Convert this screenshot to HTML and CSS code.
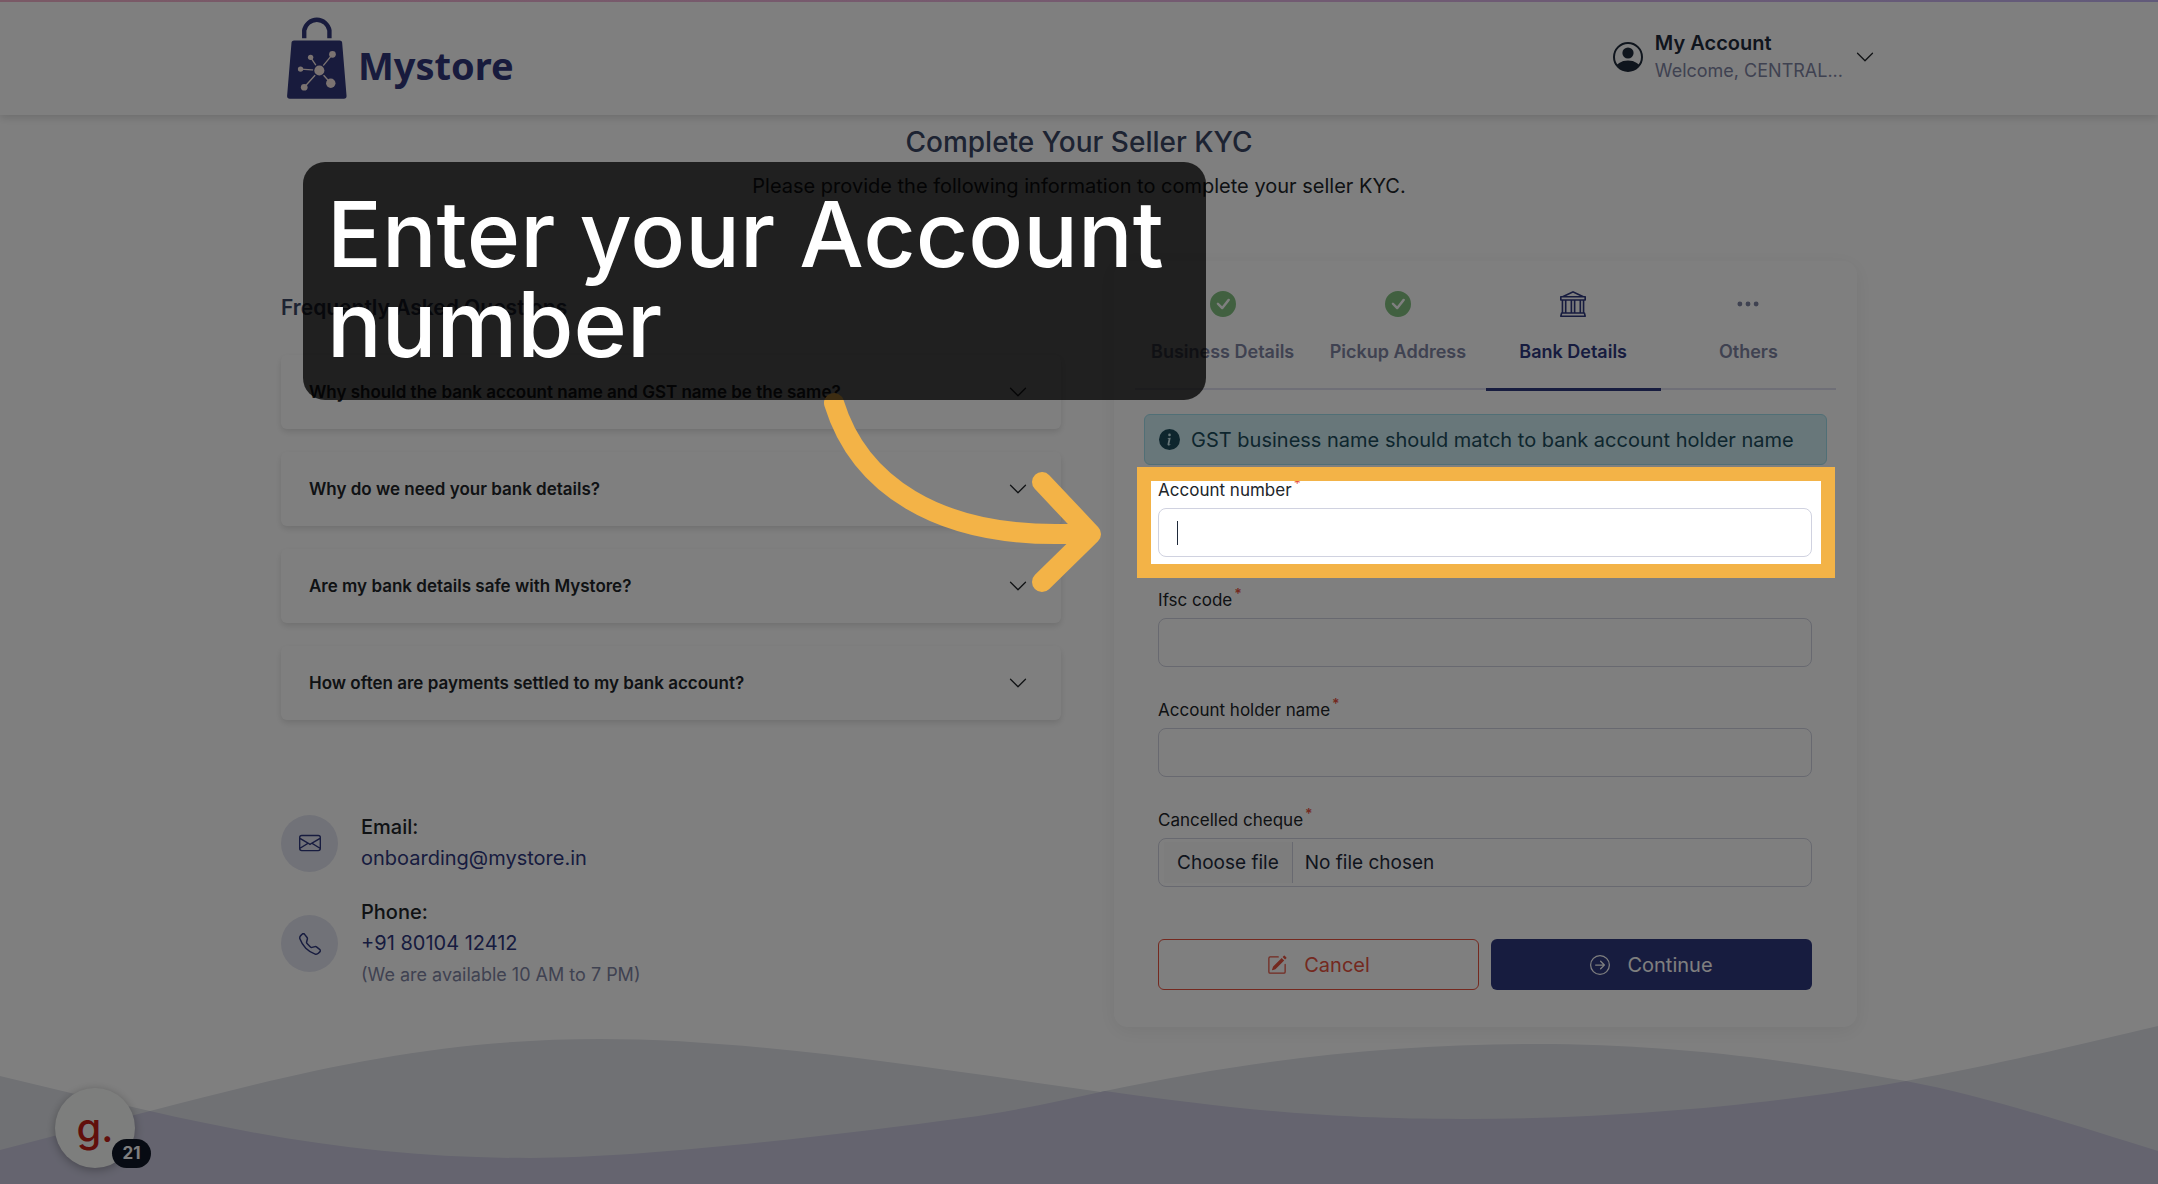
FILE: index.html
```html
<!DOCTYPE html>
<html lang="en">
<head>
    <meta charset="UTF-8">
    <meta name="viewport" content="width=device-width, initial-scale=1.0">
    <title>Complete Your Seller KYC | Mystore</title>
    <link rel="stylesheet" href="styles.css">
</head>
<body>
    <!-- Header -->
    <header class="header">
        <div class="container header-inner">
            <a href="#" class="logo">
                <svg class="logo-bag" viewBox="84 44 178 250" aria-hidden="true">
                    <path d="M135 113V90a38 38 0 0 1 75 0v23" fill="none" stroke="#30367a" stroke-width="13"/>
                    <path d="M105 120h135q8 0 8 8l13 157q0 8-8 8H92q-8 0-8-8l13-157q0-8 8-8z" fill="#30367a"/>
                    <g stroke="#f6e6e2" stroke-width="4">
                        <path d="M180 209L219 161M180 209L154 170M180 209L124 205M180 209L135 259M180 209L214 247"/>
                    </g>
                    <circle cx="180" cy="209" r="19" fill="#30367a"/>
                    <g fill="#f6e6e2">
                        <circle cx="180" cy="209" r="15"/>
                        <circle cx="219" cy="161" r="10"/>
                        <circle cx="154" cy="170" r="8"/>
                        <circle cx="124" cy="205" r="8"/>
                        <circle cx="135" cy="259" r="10"/>
                        <circle cx="214" cy="247" r="14"/>
                    </g>
                </svg>
                <span class="logo-text">Mystore</span>
            </a>
            <button type="button" class="account">
                <svg class="account-icon" viewBox="0 0 30 30" aria-hidden="true">
                    <clipPath id="face"><circle cx="15" cy="15" r="14"/></clipPath>
                    <circle cx="15" cy="15" r="14" fill="none" stroke="currentColor" stroke-width="2"/>
                    <circle cx="15" cy="11" r="5.6" fill="currentColor"/>
                    <ellipse cx="15" cy="27" rx="12.5" ry="8.5" fill="currentColor" clip-path="url(#face)"/>
                </svg>
                <span class="account-text">
                    <span class="account-title">My Account</span>
                    <span class="account-name">Welcome, CENTRAL...</span>
                </span>
                <svg class="chevron" viewBox="0 0 16 16" aria-hidden="true"><path d="M1.646 4.646a.5.5 0 0 1 .708 0L8 10.293l5.646-5.647a.5.5 0 0 1 .708.708l-6 6a.5.5 0 0 1-.708 0l-6-6a.5.5 0 0 1 0-.708"/></svg>
            </button>
        </div>
    </header>

    <!-- Main Content -->
    <main class="container main">
        <h1>Complete Your Seller KYC</h1>
        <p class="subtitle">Please provide the following information to complete your seller KYC.</p>

        <div class="columns">
            <section class="help">
                <h2>Frequently Asked Questions</h2>
                <div class="faq-list">
                    <button type="button" class="faq-item">
                        Why should the bank account name and GST name be the same?
                        <svg class="chevron" viewBox="0 0 16 16" aria-hidden="true"><path d="M1.646 4.646a.5.5 0 0 1 .708 0L8 10.293l5.646-5.647a.5.5 0 0 1 .708.708l-6 6a.5.5 0 0 1-.708 0l-6-6a.5.5 0 0 1 0-.708"/></svg>
                    </button>
                    <button type="button" class="faq-item">
                        Why do we need your bank details?
                        <svg class="chevron" viewBox="0 0 16 16" aria-hidden="true"><path d="M1.646 4.646a.5.5 0 0 1 .708 0L8 10.293l5.646-5.647a.5.5 0 0 1 .708.708l-6 6a.5.5 0 0 1-.708 0l-6-6a.5.5 0 0 1 0-.708"/></svg>
                    </button>
                    <button type="button" class="faq-item">
                        Are my bank details safe with Mystore?
                        <svg class="chevron" viewBox="0 0 16 16" aria-hidden="true"><path d="M1.646 4.646a.5.5 0 0 1 .708 0L8 10.293l5.646-5.647a.5.5 0 0 1 .708.708l-6 6a.5.5 0 0 1-.708 0l-6-6a.5.5 0 0 1 0-.708"/></svg>
                    </button>
                    <button type="button" class="faq-item">
                        How often are payments settled to my bank account?
                        <svg class="chevron" viewBox="0 0 16 16" aria-hidden="true"><path d="M1.646 4.646a.5.5 0 0 1 .708 0L8 10.293l5.646-5.647a.5.5 0 0 1 .708.708l-6 6a.5.5 0 0 1-.708 0l-6-6a.5.5 0 0 1 0-.708"/></svg>
                    </button>
                </div>

                <div class="contact">
                    <div class="contact-row">
                        <span class="contact-icon">
                            <svg viewBox="0 0 16 16" aria-hidden="true"><path d="M0 4a2 2 0 0 1 2-2h12a2 2 0 0 1 2 2v8a2 2 0 0 1-2 2H2a2 2 0 0 1-2-2zm2-1a1 1 0 0 0-1 1v.217l7 4.2 7-4.2V4a1 1 0 0 0-1-1zm13 2.383-4.708 2.825L15 11.105zm-.034 6.876-5.64-3.471L8 9.583l-1.326-.795-5.64 3.47A1 1 0 0 0 2 13h12a1 1 0 0 0 .966-.741M1 11.105l4.708-2.897L1 5.383z"/></svg>
                        </span>
                        <div class="contact-info">
                            <strong>Email:</strong>
                            <a href="mailto:onboarding@mystore.in">onboarding@mystore.in</a>
                        </div>
                    </div>
                    <div class="contact-row">
                        <span class="contact-icon">
                            <svg viewBox="0 0 16 16" aria-hidden="true"><path d="M3.654 1.328a.678.678 0 0 0-1.015-.063L1.605 2.3c-.483.484-.661 1.169-.45 1.77a17.6 17.6 0 0 0 4.168 6.608 17.6 17.6 0 0 0 6.608 4.168c.601.211 1.286.033 1.77-.45l1.034-1.034a.678.678 0 0 0-.063-1.015l-2.307-1.794a.68.68 0 0 0-.58-.122l-2.19.547a1.75 1.75 0 0 1-1.657-.459L5.482 8.062a1.75 1.75 0 0 1-.46-1.657l.548-2.19a.68.68 0 0 0-.122-.58zM1.884.511a1.745 1.745 0 0 1 2.612.163L6.29 2.98c.329.423.445.974.315 1.494l-.547 2.19a.68.68 0 0 0 .178.643l2.457 2.457a.68.68 0 0 0 .644.178l2.189-.547a1.75 1.75 0 0 1 1.494.315l2.306 1.794c.829.645.905 1.87.163 2.611l-1.034 1.034c-.74.74-1.846 1.065-2.877.702a18.6 18.6 0 0 1-7.01-4.42 18.6 18.6 0 0 1-4.42-7.009c-.362-1.03-.037-2.137.703-2.877z"/></svg>
                        </span>
                        <div class="contact-info">
                            <strong>Phone:</strong>
                            <a href="tel:+918010412412">+91 80104 12412</a>
                            <small>(We are available 10 AM to 7 PM)</small>
                        </div>
                    </div>
                </div>
            </section>

            <section class="card">
                <nav class="tabs">
                    <a href="#" class="tab">
                        <svg class="done" viewBox="0 0 16 16" aria-hidden="true"><path d="M16 8A8 8 0 1 1 0 8a8 8 0 0 1 16 0m-3.97-3.03a.75.75 0 0 0-1.08.022L7.477 9.417 5.384 7.323a.75.75 0 0 0-1.06 1.06L6.97 11.03a.75.75 0 0 0 1.079-.02l3.992-4.99a.75.75 0 0 0-.01-1.05z"/></svg>
                        Business Details
                    </a>
                    <a href="#" class="tab">
                        <svg class="done" viewBox="0 0 16 16" aria-hidden="true"><path d="M16 8A8 8 0 1 1 0 8a8 8 0 0 1 16 0m-3.97-3.03a.75.75 0 0 0-1.08.022L7.477 9.417 5.384 7.323a.75.75 0 0 0-1.06 1.06L6.97 11.03a.75.75 0 0 0 1.079-.02l3.992-4.99a.75.75 0 0 0-.01-1.05z"/></svg>
                        Pickup Address
                    </a>
                    <a href="#" class="tab active">
                        <svg viewBox="0 0 16 16" aria-hidden="true"><path d="m8 0 6.61 3h.89a.5.5 0 0 1 .5.5v2a.5.5 0 0 1-.5.5H15v7a.5.5 0 0 1 .485.38l.5 2a.498.498 0 0 1-.485.62H.5a.498.498 0 0 1-.485-.62l.5-2A.5.5 0 0 1 1 13V6H.5a.5.5 0 0 1-.5-.5v-2A.5.5 0 0 1 .5 3h.89zM3.777 3h8.447L8 1zM2 6v7h1V6zm2 0v7h2.5V6zm3.5 0v7h1V6zm2 0v7H12V6zM13 6v7h1V6zm2-1V4H1v1zm-.39 9H1.39l-.25 1h13.72z"/></svg>
                        Bank Details
                    </a>
                    <a href="#" class="tab">
                        <svg viewBox="0 0 16 16" aria-hidden="true"><path d="M3 9.500a1.500 1.500 0 1 1 0-3 1.500 1.500 0 0 1 0 3m5 0a1.500 1.500 0 1 1 0-3 1.500 1.500 0 0 1 0 3m5 0a1.500 1.500 0 1 1 0-3 1.500 1.500 0 0 1 0 3"/></svg>
                        Others
                    </a>
                </nav>

                <div class="alert">
                    <svg viewBox="0 0 16 16" aria-hidden="true"><path d="M8 16A8 8 0 1 0 8 0a8 8 0 0 0 0 16m.93-9.412-1 4.705c-.07.34.029.533.304.533.194 0 .487-.07.686-.246l-.088.416c-.287.346-.92.598-1.465.598-.703 0-1.002-.422-.808-1.319l.738-3.468c.064-.293.006-.399-.287-.47l-.451-.081.082-.381 2.290-.287zM8 5.500a1 1 0 1 1 0-2 1 1 0 0 1 0 2"/></svg>
                    GST business name should match to bank account holder name
                </div>

                <form class="kyc-form">
                    <div class="form-group">
                        <label for="account">Account number<sup>*</sup></label>
                        <input type="text" id="account">
                        <span class="caret"></span>
                        <!-- Highlighted step, its shadow dims the rest of the page -->
                        <div class="spotlight"></div>
                    </div>
                    <div class="form-group">
                        <label for="ifsc">Ifsc code<sup>*</sup></label>
                        <input type="text" id="ifsc">
                    </div>
                    <div class="form-group">
                        <label for="holder">Account holder name<sup>*</sup></label>
                        <input type="text" id="holder">
                    </div>
                    <div class="form-group">
                        <label for="cheque">Cancelled cheque<sup>*</sup></label>
                        <label for="cheque" class="file-box">
                            <span class="file-btn">Choose file</span>
                            <span class="file-name">No file chosen</span>
                        </label>
                        <input type="file" id="cheque" class="file-input">
                    </div>
                    <div class="form-actions">
                        <button type="button" class="btn btn-cancel">
                            <svg viewBox="0 0 16 16" aria-hidden="true"><path d="M15.502 1.940a.5.5 0 0 1 0 .706L14.459 3.690l-2-2L13.502.646a.5.5 0 0 1 .707 0l1.293 1.293zm-1.750 2.456-2-2L4.939 9.210a.5.5 0 0 0-.121.196l-.805 2.414a.25.25 0 0 0 .316.316l2.414-.805a.5.5 0 0 0 .196-.120z"/><path d="M1 13.500A1.500 1.500 0 0 0 2.500 15h11a1.500 1.500 0 0 0 1.500-1.500v-6a.5.5 0 0 0-1 0v6a.5.5 0 0 1-.5.5h-11a.5.5 0 0 1-.5-.5v-11a.5.5 0 0 1 .5-.5H9a.5.5 0 0 0 0-1H2.500A1.500 1.500 0 0 0 1 2.500z"/></svg>
                            Cancel
                        </button>
                        <button type="submit" class="btn btn-continue">
                            <svg viewBox="0 0 16 16" aria-hidden="true"><path d="M1 8a7 7 0 1 0 14 0A7 7 0 0 0 1 8m15 0A8 8 0 1 1 0 8a8 8 0 0 1 16 0M4.500 7.500a.5.5 0 0 0 0 1h5.793l-2.147 2.146a.5.5 0 0 0 .708.708l3-3a.5.5 0 0 0 0-.708l-3-3a.5.5 0 1 0-.708.708L10.293 7.500z"/></svg>
                            Continue
                        </button>
                    </div>
                </form>
            </section>
        </div>

        <!-- Guide callout -->
        <svg class="arrow" viewBox="0 0 290 210" aria-hidden="true">
            <path d="M13 13C36 88 110 153 266 143M221 92L270 144L221 192" fill="none" stroke="#f3b347" stroke-width="20" stroke-linecap="round" stroke-linejoin="round"/>
        </svg>
        <div class="callout">Enter your Account number</div>
    </main>

    <!-- Footer waves -->
    <svg class="waves" viewBox="0 0 2158 160" preserveAspectRatio="none" aria-hidden="true">
        <path d="M0 126C50 113 100 100 150 87C300 48 430 15 600 15C760 15 950 47 1101 68C1240 86 1330 95 1463 95C1640 95 1800 76 1906 57C2000 40 2090 18 2158 2V160H0Z"/>
        <path d="M0 52C50 64 100 76 150 87C290 119 400 134 530 134C640 134 830 112 963 94C1010 88 1060 77 1105 67C1240 38 1380 20 1535 20C1680 20 1800 38 1906 57C1990 73 2080 103 2158 127V160H0Z"/>
        <!-- Tint where both waves cross -->
        <path class="waves-cross" d="M0 126C50 113 100 100 150 87C290 119 400 134 530 134C640 134 830 112 963 94C1010 88 1060 77 1105 67C1240 86 1330 95 1463 95C1640 95 1800 76 1906 57C1990 73 2080 103 2158 127V160H0Z"/>
    </svg>

    <button type="button" class="guide">
        <span class="guide-logo">g.</span>
        <span class="guide-count">21</span>
    </button>
</body>
</html>
```
FILE: styles.css
```css
* {
    box-sizing: border-box;
    margin: 0;
    padding: 0;
}

body {
    font-family: Inter, 'Liberation Sans', sans-serif;
    font-size: 20px;
    color: #212529;
    background-color: #fff;
    min-height: 100vh;
    position: relative;
    overflow-x: hidden;
}

a {
    color: #2f387f;
    text-decoration: none;
}

button, input {
    font: inherit;
    color: inherit;
}

button {
    border: none;
    background: none;
    cursor: pointer;
}

svg {
    fill: currentColor;
    flex-shrink: 0;
}

.container {
    max-width: 1596px;
    margin: 0 auto;
}

/* Header */
.header {
    height: 115px;
    border-top: 2px solid;
    border-image: linear-gradient(90deg, #f5b3cc, #ecb4e0 50%, #c3b4f5) 1;
    box-shadow: 0 3px 8px rgba(0,0,0,0.14);
}

.header-inner {
    height: 100%;
    padding: 0 2px 4px 6px;
    display: flex;
    justify-content: space-between;
    align-items: center;
}

.logo {
    display: flex;
    align-items: center;
    gap: 11px;
    color: #30367a;
}

.logo-bag {
    width: 60px;
    height: 84px;
}

.logo-text {
    font-family: 'Noto Sans', sans-serif;
    font-size: 38px;
    font-weight: 700;
    padding-top: 16px;
}

.account {
    display: flex;
    align-items: center;
    gap: 12px;
    text-align: left;
}

.account-icon {
    width: 30px;
    height: 30px;
    color: #1f2a3a;
}

.account-text {
    display: flex;
    flex-direction: column;
    line-height: 27px;
}

.account-title {
    font-weight: 600;
    color: #1f2a3a;
}

.account-name {
    font-size: 18px;
    color: #7f84a3;
}

.chevron {
    width: 20px;
    height: 20px;
}

/* Main content */
.main {
    position: relative;
    padding-top: 9px;
    text-align: center;
}

h1 {
    font-size: 28px;
    font-weight: 500;
    line-height: 36px;
    color: #3b4765;
}

.subtitle {
    line-height: 30px;
    margin: 11px 0 60px;
}

.columns {
    display: grid;
    grid-template-columns: 21fr 20fr;
    gap: 53px;
    padding-right: 20px;
    text-align: left;
}

/* FAQ */
.help {
    padding-top: 31px;
}

h2 {
    font-size: 21px;
    font-weight: 600;
    line-height: 32px;
    color: #3b4765;
    margin-bottom: 31px;
}

.faq-list {
    display: grid;
    gap: 23px;
}

.faq-item {
    height: 74px;
    padding: 0 33px 0 28px;
    display: flex;
    justify-content: space-between;
    align-items: center;
    font-size: 17px;
    font-weight: 600;
    border-radius: 6px;
    box-shadow: 0 3px 6px rgba(0,0,0,0.12);
}

.contact {
    display: grid;
    gap: 23px;
    margin-top: 92px;
}

.contact-row {
    display: flex;
    align-items: center;
    gap: 23px;
}

.contact-icon {
    width: 57px;
    height: 57px;
    border-radius: 50%;
    background-color: #e3e5f0;
    color: #2f387f;
    display: flex;
    align-items: center;
    justify-content: center;
}

.contact-icon svg {
    width: 22px;
    height: 22px;
}

.contact-info {
    display: flex;
    flex-direction: column;
    line-height: 31px;
}

.contact-info strong {
    font-weight: 500;
}

.contact-info small {
    font-size: 18px;
    color: #7f84a3;
}

/* Form card */
.card {
    padding: 0 21px 37px;
    border-radius: 14px;
    box-shadow: 0 4px 20px rgba(0,0,0,0.07);
}

.tabs {
    display: grid;
    grid-template-columns: repeat(4, 1fr);
    align-items: start;
    height: 130px;
}

.tab {
    padding: 30px 0 23px;
    border-bottom: 2px solid #dedfee;
    display: flex;
    flex-direction: column;
    align-items: center;
    gap: 22px;
    font-size: 18px;
    font-weight: 600;
    line-height: 26px;
    color: #7f84a3;
}

.tab svg {
    width: 26px;
    height: 26px;
}

.tab .done {
    color: #82c181;
}

.tab.active {
    color: #2f387f;
    border-bottom: 3px solid #2f387f;
}

.alert {
    margin: 23px 9px 14px;
    padding: 0 14px;
    height: 51px;
    display: flex;
    align-items: center;
    gap: 11px;
    color: #1c4c5c;
    background-color: #d0eef4;
    border: 1px solid #a0dfec;
    border-radius: 6px;
}

.alert svg {
    width: 21px;
    height: 21px;
}

.kyc-form {
    padding: 0 24px 0 23px;
    display: grid;
    gap: 32px;
}

.form-group {
    position: relative;
    display: flex;
    flex-direction: column;
    gap: 7px;
}

.form-group label {
    font-size: 17px;
    line-height: 22px;
}

.form-group sup {
    font-size: 14px;
    font-weight: 600;
    line-height: 0;
    color: #e8523f;
    margin-left: 2px;
}

.form-group input[type="text"],
.form-group .file-box {
    height: 49px;
    width: 100%;
    border: 1px solid #d0d2e0;
    border-radius: 8px;
    padding: 0 18px;
    background-color: transparent;
    outline: none;
}

.form-group .file-box {
    display: flex;
    font-size: 19px;
    line-height: 42px;
    padding: 3px 5px;
    color: #1f2a3a;
}

.file-btn {
    padding: 0 13px;
    background-color: #fafafa;
    border-right: 1px solid #d0d2e0;
}

.file-name {
    padding-left: 12px;
}

.file-input {
    position: absolute;
    opacity: 0;
    width: 1px;
    height: 1px;
    bottom: 0;
}

.caret {
    position: absolute;
    left: 19px;
    bottom: 12px;
    width: 1px;
    height: 24px;
    background-color: #1f2a3a;
}

.spotlight {
    position: absolute;
    inset: -12px -23px -21px -21px;
    z-index: 10;
    border: 14px solid #f3b347;
    box-shadow: 0 0 0 3000px rgba(0,0,0,0.5);
    pointer-events: none;
}

.form-actions {
    display: grid;
    grid-template-columns: 1fr 1fr;
    gap: 12px;
    margin-top: 20px;
}

.btn {
    height: 51px;
    border-radius: 6px;
    display: flex;
    align-items: center;
    justify-content: center;
    gap: 17px;
}

.btn svg {
    width: 20px;
    height: 20px;
}

.btn-cancel {
    color: #e8523f;
    border: 1px solid #e8523f;
}

.btn-continue {
    color: #fff;
    background-color: #2f387f;
}

/* Callout over the page */
.callout {
    position: absolute;
    top: 47px;
    left: 22px;
    z-index: 12;
    width: 903px;
    padding: 27px 24px 31px;
    border-radius: 22px;
    background-color: rgba(0,0,0,0.75);
    color: #fff;
    font-size: 91px;
    font-weight: 500;
    line-height: 90px;
    text-align: left;
}

.arrow {
    position: absolute;
    top: 275px;
    left: 540px;
    z-index: 11;
    width: 290px;
    height: 210px;
}

/* Footer */
.waves {
    position: absolute;
    left: 0;
    bottom: 0;
    z-index: -1;
    width: 100%;
    height: 160px;
    fill: #e1e3e9;
}

.waves-cross {
    fill: #cac9de;
}

.guide {
    position: absolute;
    left: 55px;
    bottom: 16px;
    width: 80px;
    height: 80px;
    border-radius: 50%;
    background-color: #fbfdfb;
    box-shadow: 0 2px 10px rgba(0,0,0,0.3);
}

.guide-logo {
    font-size: 40px;
    font-weight: 500;
    line-height: 60px;
    color: #c41f17;
}

.guide-count {
    position: absolute;
    left: 57px;
    bottom: 0;
    width: 39px;
    height: 29px;
    border-radius: 15px;
    background-color: #0f1626;
    color: #fff;
    font-size: 17px;
    font-weight: 700;
    line-height: 29px;
}
```
